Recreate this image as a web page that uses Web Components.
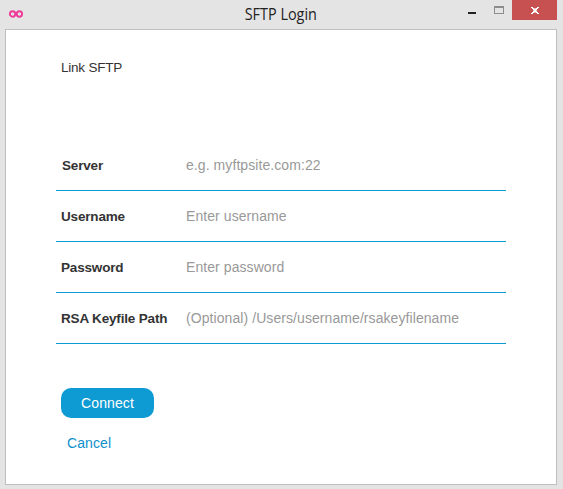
<!DOCTYPE html>
<html lang="en">
<head>
<meta charset="utf-8">
<title>SFTP Login</title>
<style>
html, body { margin: 0; height: 100%; overflow: hidden; background: #e4e4e4; }
body { font-family: "Liberation Sans", Arial, sans-serif; }
</style>
</head>
<body>
<app-window heading="SFTP Login">
  <login-form heading="Link SFTP">
    <form-row label="Server" style="--label-start:6px">e.g. myftpsite.com:22</form-row>
    <form-row label="Username">Enter username</form-row>
    <form-row label="Password">Enter password</form-row>
    <form-row label="RSA Keyfile Path">(Optional) /Users/username/rsakeyfilename</form-row>
    <action-button slot="actions" primary>Connect</action-button>
    <action-button slot="actions">Cancel</action-button>
  </login-form>
</app-window>
<script>
class BaseElement extends HTMLElement {
  connectedCallback() {
    if (this.shadowRoot) return;
    this.attachShadow({ mode: "open" }).innerHTML = this.render();
  }
}

customElements.define("window-controls", class extends BaseElement {
  render() {
    return `<style>
      :host { display: grid; grid-template-columns: 27px 27px 45px; height: 20px; }
      svg { display: block; shape-rendering: crispEdges; }
      .close { background: #c75050; }
    </style>
    <svg width="27" height="20"><rect x="10" y="12" width="8" height="2" fill="#222"/></svg>
    <svg width="27" height="20"><path d="M9 6h10v8H9zM10 8v5h8V8z" fill="#8c8c8c" fill-rule="evenodd"/></svg>
    <svg class="close" width="45" height="20"><path fill="#fff" d="M19 7h2v1h1v1h2V8h1V7h2v1h-1v1h-1v1h-1v1h1v1h1v1h1v1h-2v-1h-1v-1h-2v1h-1v1h-2v-1h1v-1h1v-1h1v-1h-1V9h-1V8h-1z"/><path fill="#fff" opacity=".6" d="M21 10h1v1h-1zM24 10h1v1h-1zM22 8h1v1h-1zM23 8h1v1h-1zM22 12h2v1h-2z"/></svg>`;
  }
});

customElements.define("app-window", class extends BaseElement {
  render() {
    return `<style>
      :host { display: grid; grid-template-rows: 29px 456px; width: 563px; height: 489px; background: #e4e4e4; }
      header { display: grid; grid-template-columns: 103px 1fr 99px; padding-right: 6px; }
      .icon { display: block; margin: 9px 0 0 8px; }
      h1 { margin: 0; font: 400 15.5px/29px "Open Sans", "Noto Sans", sans-serif; color: #222; text-align: center; white-space: nowrap; }
      h1 span { display: inline-block; transform: scaleX(.93); }
      main { box-sizing: border-box; margin: 0 6px 0 5px; border: 1px solid #bfbfbf; background: #fff; }
    </style>
    <header>
      <svg class="icon" width="16" height="10" viewBox="0 0 16 10" fill="none" stroke="#f03a98" stroke-width="1.900"><circle cx="4.600" cy="5" r="2.700"/><circle cx="11.400" cy="5" r="2.700"/><path d="M7 4l2 2M9 4L7 6" stroke-width="1.300"/></svg>
      <h1><span>${this.getAttribute("heading")}</span></h1>
      <window-controls></window-controls>
    </header>
    <main><slot></slot></main>`;
  }
});

customElements.define("login-form", class extends BaseElement {
  render() {
    return `<style>
      :host { display: block; padding: 28px 50px 0; }
      h2 { margin: 0 0 62px 5px; font-size: 13.5px; font-weight: 400; line-height: 20px; letter-spacing: -.22px; color: #333; }
      .actions { display: flex; flex-direction: column; align-items: flex-start; gap: 10px; margin: 44px 0 0 5px; }
    </style>
    <h2>${this.getAttribute("heading")}</h2>
    <slot></slot>
    <div class="actions"><slot name="actions"></slot></div>`;
  }
});

customElements.define("form-row", class extends BaseElement {
  render() {
    return `<style>
      :host { display: grid; grid-template-columns: 130px 1fr; align-items: center; box-sizing: border-box; height: 51px; border-bottom: 1px solid #0e9bd3; white-space: nowrap; }
      label { padding-left: var(--label-start, 5px); font-size: 13.5px; font-weight: 700; letter-spacing: -.17px; color: #333; }
      .hint { font-size: 14px; letter-spacing: .075px; color: #999; }
    </style>
    <label>${this.getAttribute("label")}</label>
    <span class="hint"><slot></slot></span>`;
  }
});

customElements.define("action-button", class extends BaseElement {
  render() {
    return `<style>
      :host { display: block; }
      button { display: block; margin: 0; padding: 0 6px; border: 0; background: none; font: 14px/30px "Liberation Sans", Arial, sans-serif; letter-spacing: .1px; color: #0e8fcb; }
      :host([primary]) button { width: 93px; height: 30px; padding: 0; border-radius: 10px; background: #0e9ad3; color: #fff; }
    </style>
    <button type="button"><slot></slot></button>`;
  }
});
</script>
</body>
</html>
